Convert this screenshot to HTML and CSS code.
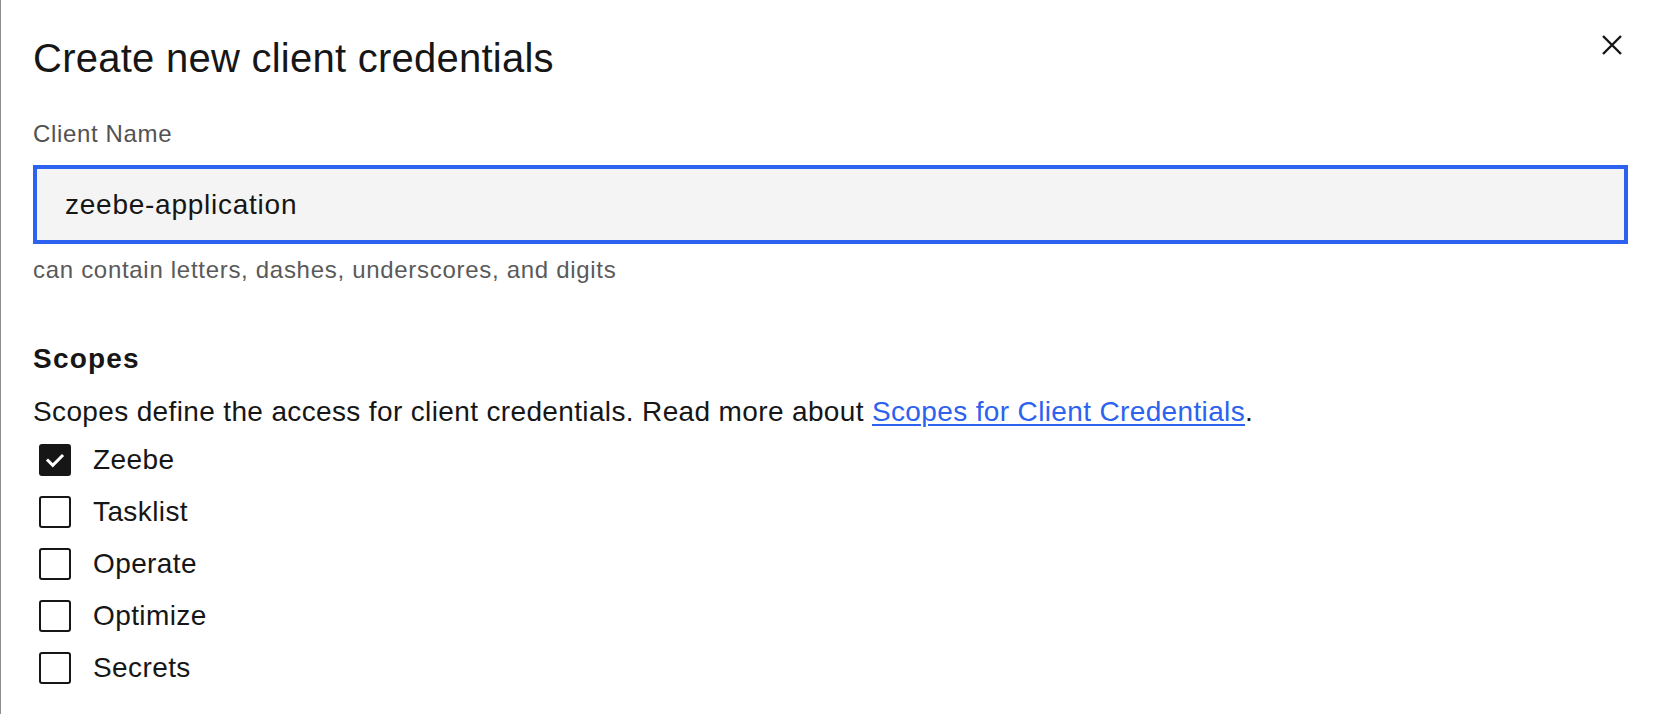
FILE: index.html
```html
<!DOCTYPE html>
<html lang="en">
<head>
<meta charset="utf-8">
<title>Create new client credentials</title>
<link rel="stylesheet" href="styles.css">
</head>
<body>
<div class="modal">
  <header class="modal-header">
    <h1 class="modal-title">Create new client credentials</h1>
    <button class="close-btn" aria-label="Close">
      <svg width="20" height="20" viewBox="0 0 20 20" aria-hidden="true"><path d="M1 1 L19 19 M19 1 L1 19" stroke="#161616" stroke-width="2.4" fill="none"/></svg>
    </button>
  </header>

  <div class="field">
    <label class="field-label" for="client-name">Client Name</label>
    <div class="input-wrap"><input id="client-name" class="text-input" type="text" value="zeebe-application"></div>
    <div class="helper">can contain letters, dashes, underscores, and digits</div>
  </div>

  <h2 class="section-title">Scopes</h2>
  <p class="section-desc">Scopes define the access for client credentials. Read more about <a href="#" class="link">Scopes for Client Credentials</a>.</p>

  <ul class="checks">
    <li class="check-row"><span class="box checked"><svg width="32" height="32" viewBox="0 0 32 32" aria-hidden="true"><path d="M9 16.5 L13.8 21.3 L23 12" stroke="#fff" stroke-width="3" fill="none" stroke-linecap="square"/></svg></span><span class="check-label">Zeebe</span></li>
    <li class="check-row"><span class="box"></span><span class="check-label">Tasklist</span></li>
    <li class="check-row"><span class="box"></span><span class="check-label">Operate</span></li>
    <li class="check-row"><span class="box"></span><span class="check-label">Optimize</span></li>
    <li class="check-row"><span class="box"></span><span class="check-label">Secrets</span></li>
  </ul>
</div>
</body>
</html>
```
FILE: styles.css
```css
html, body {
  margin: 0;
  padding: 0;
  background: #ffffff;
}
body {
  font-family: "Liberation Sans", Arial, sans-serif;
  color: #161616;
  height: 714px;
  overflow: hidden;
  border-left: 1px solid #8d8d8d;
  box-sizing: border-box;
}
.modal {
  padding: 34px 30px 0 32px;
}
.modal-header {
  display: flex;
  justify-content: space-between;
  align-items: flex-start;
}
.modal-title {
  margin: 0;
  font-size: 40px;
  line-height: 48px;
  font-weight: 400;
  letter-spacing: 0.25px;
}
.close-btn {
  border: 0;
  background: none;
  padding: 0;
  margin: 1px 6px 0 0;
  width: 20px;
  height: 20px;
  display: flex;
}
.field {
  margin-top: 36px;
}
.field-label {
  display: block;
  font-size: 24px;
  line-height: 32px;
  color: #525252;
  letter-spacing: 0.65px;
  margin-bottom: 15px;
}
.input-wrap {
  display: flex;
}
.text-input {
  flex: 1;
  box-sizing: border-box;
  height: 79px;
  border: 4px solid #2c62ef;
  background: #f4f4f4;
  padding: 0 28px;
  font-family: "Liberation Sans", Arial, sans-serif;
  font-size: 28px;
  color: #161616;
  outline: none;
  border-radius: 0;
  letter-spacing: 0.75px;
}
.helper {
  margin-top: 10px;
  font-size: 24px;
  line-height: 32px;
  color: #5a5a5a;
  letter-spacing: 0.7px;
}
.section-title {
  margin: 55px 0 0;
  font-size: 28px;
  line-height: 36px;
  font-weight: 700;
  letter-spacing: 1.2px;
}
.section-desc {
  margin: 15px 0 0;
  font-size: 28px;
  line-height: 40px;
  letter-spacing: 0.36px;
}
.link {
  color: #2c62ef;
  text-decoration: underline;
  text-underline-offset: 3px;
  text-decoration-thickness: 2px;
}
.checks {
  list-style: none;
  margin: 8px 0 0;
  padding: 0;
  display: flex;
  flex-direction: column;
  gap: 12px;
}
.check-row {
  display: flex;
  align-items: center;
  height: 40px;
  padding-left: 6px;
}
.box {
  box-sizing: border-box;
  width: 32px;
  height: 32px;
  border: 2px solid #161616;
  border-radius: 3px;
  display: flex;
  align-items: center;
  justify-content: center;
  flex: none;
}
.box.checked {
  background: #161616;
}
.box.checked svg {
  margin: -2px;
}
.check-label {
  margin-left: 22px;
  font-size: 28px;
  line-height: 40px;
  letter-spacing: 0.4px;
}
```
